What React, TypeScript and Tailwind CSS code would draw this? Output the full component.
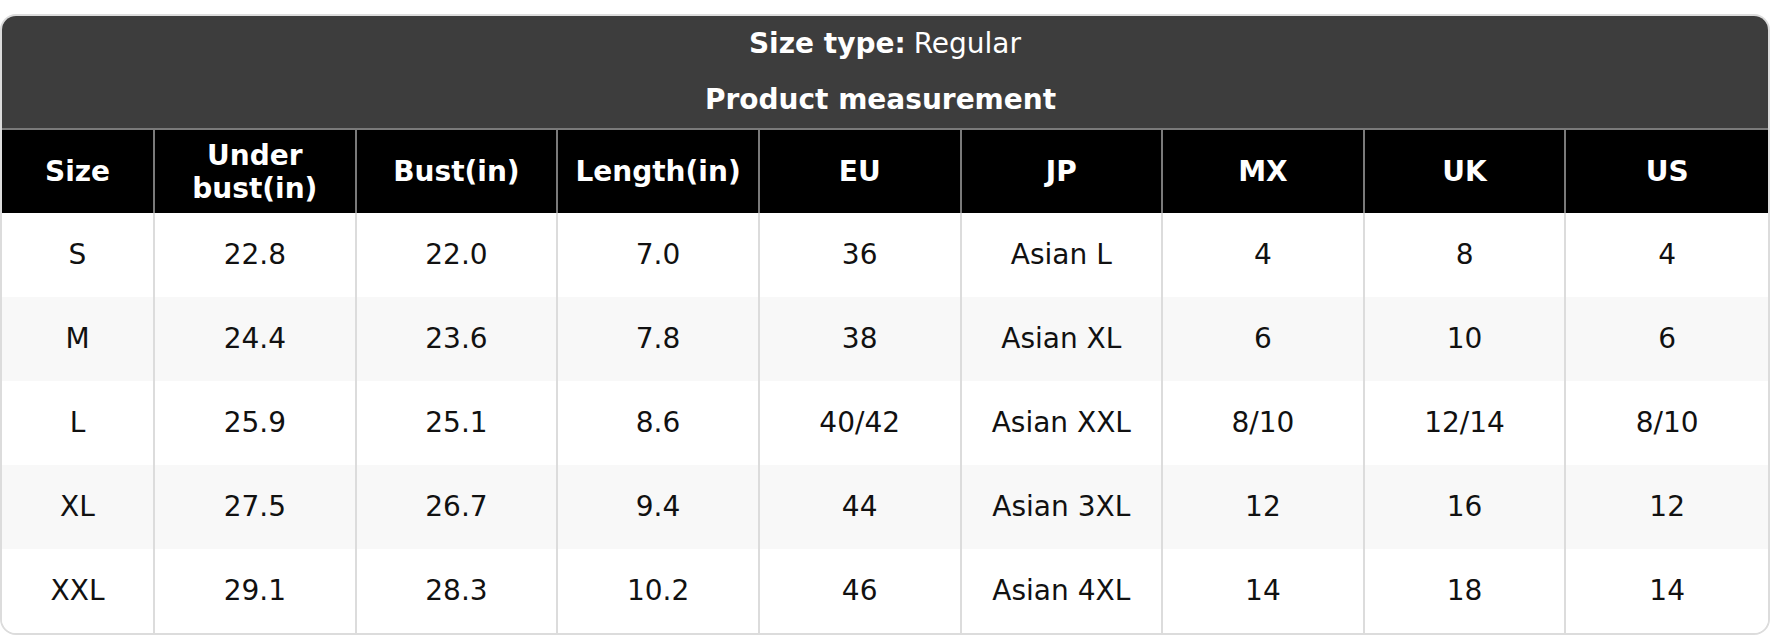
const headers = ["Size", "Under bust(in)", "Bust(in)", "Length(in)", "EU", "JP", "MX", "UK", "US"];

const rows = [
  ["S", "22.8", "22.0", "7.0", "36", "Asian L", "4", "8", "4"],
  ["M", "24.4", "23.6", "7.8", "38", "Asian XL", "6", "10", "6"],
  ["L", "25.9", "25.1", "8.6", "40/42", "Asian XXL", "8/10", "12/14", "8/10"],
  ["XL", "27.5", "26.7", "9.4", "44", "Asian 3XL", "12", "16", "12"],
  ["XXL", "29.1", "28.3", "10.2", "46", "Asian 4XL", "14", "18", "14"],
];

export default function App() {
  return (
    <div className="bg-white pt-[14px] font-['DejaVu_Sans',sans-serif]">
      <div className="overflow-hidden rounded-[16px] border-2 border-[#dcdcdc] bg-white">
        <div className="bg-[#3d3d3d] text-white">
          <div className="flex h-[55px] items-center justify-center text-[28px]">
            <span className="font-bold">Size type:</span>
            <span className="ml-[8px]">Regular</span>
          </div>
          <div className="flex h-[57px] items-center justify-center pr-[9px] text-[28px] font-bold">
            Product measurement
          </div>
        </div>
        <div className="grid grid-cols-[153px_repeat(8,minmax(0,1fr))]">
          {headers.map((h, i) => (
            <div
              key={h}
              className={
                "flex h-[85px] items-center justify-center border-t-2 border-[#7a7a7a] bg-black px-2 text-center text-[28px] leading-[33px] font-bold text-white" +
                (i < headers.length - 1 ? " border-r-2" : "")
              }
            >
              {h === "Under bust(in)" ? (
                <span>
                  Under
                  <br />
                  bust(in)
                </span>
              ) : (
                h
              )}
            </div>
          ))}
          {rows.map((r, ri) =>
            r.map((c, ci) => (
              <div
                key={ri + "-" + ci}
                className={
                  "flex h-[84px] items-center justify-center border-[#dcdcdc] text-[28px] text-[#111]" +
                  (ri % 2 === 1 ? " bg-[#f8f8f8]" : " bg-white") +
                  (ci < r.length - 1 ? " border-r-2" : "")
                }
              >
                {c}
              </div>
            ))
          )}
        </div>
      </div>
    </div>
  );
}
